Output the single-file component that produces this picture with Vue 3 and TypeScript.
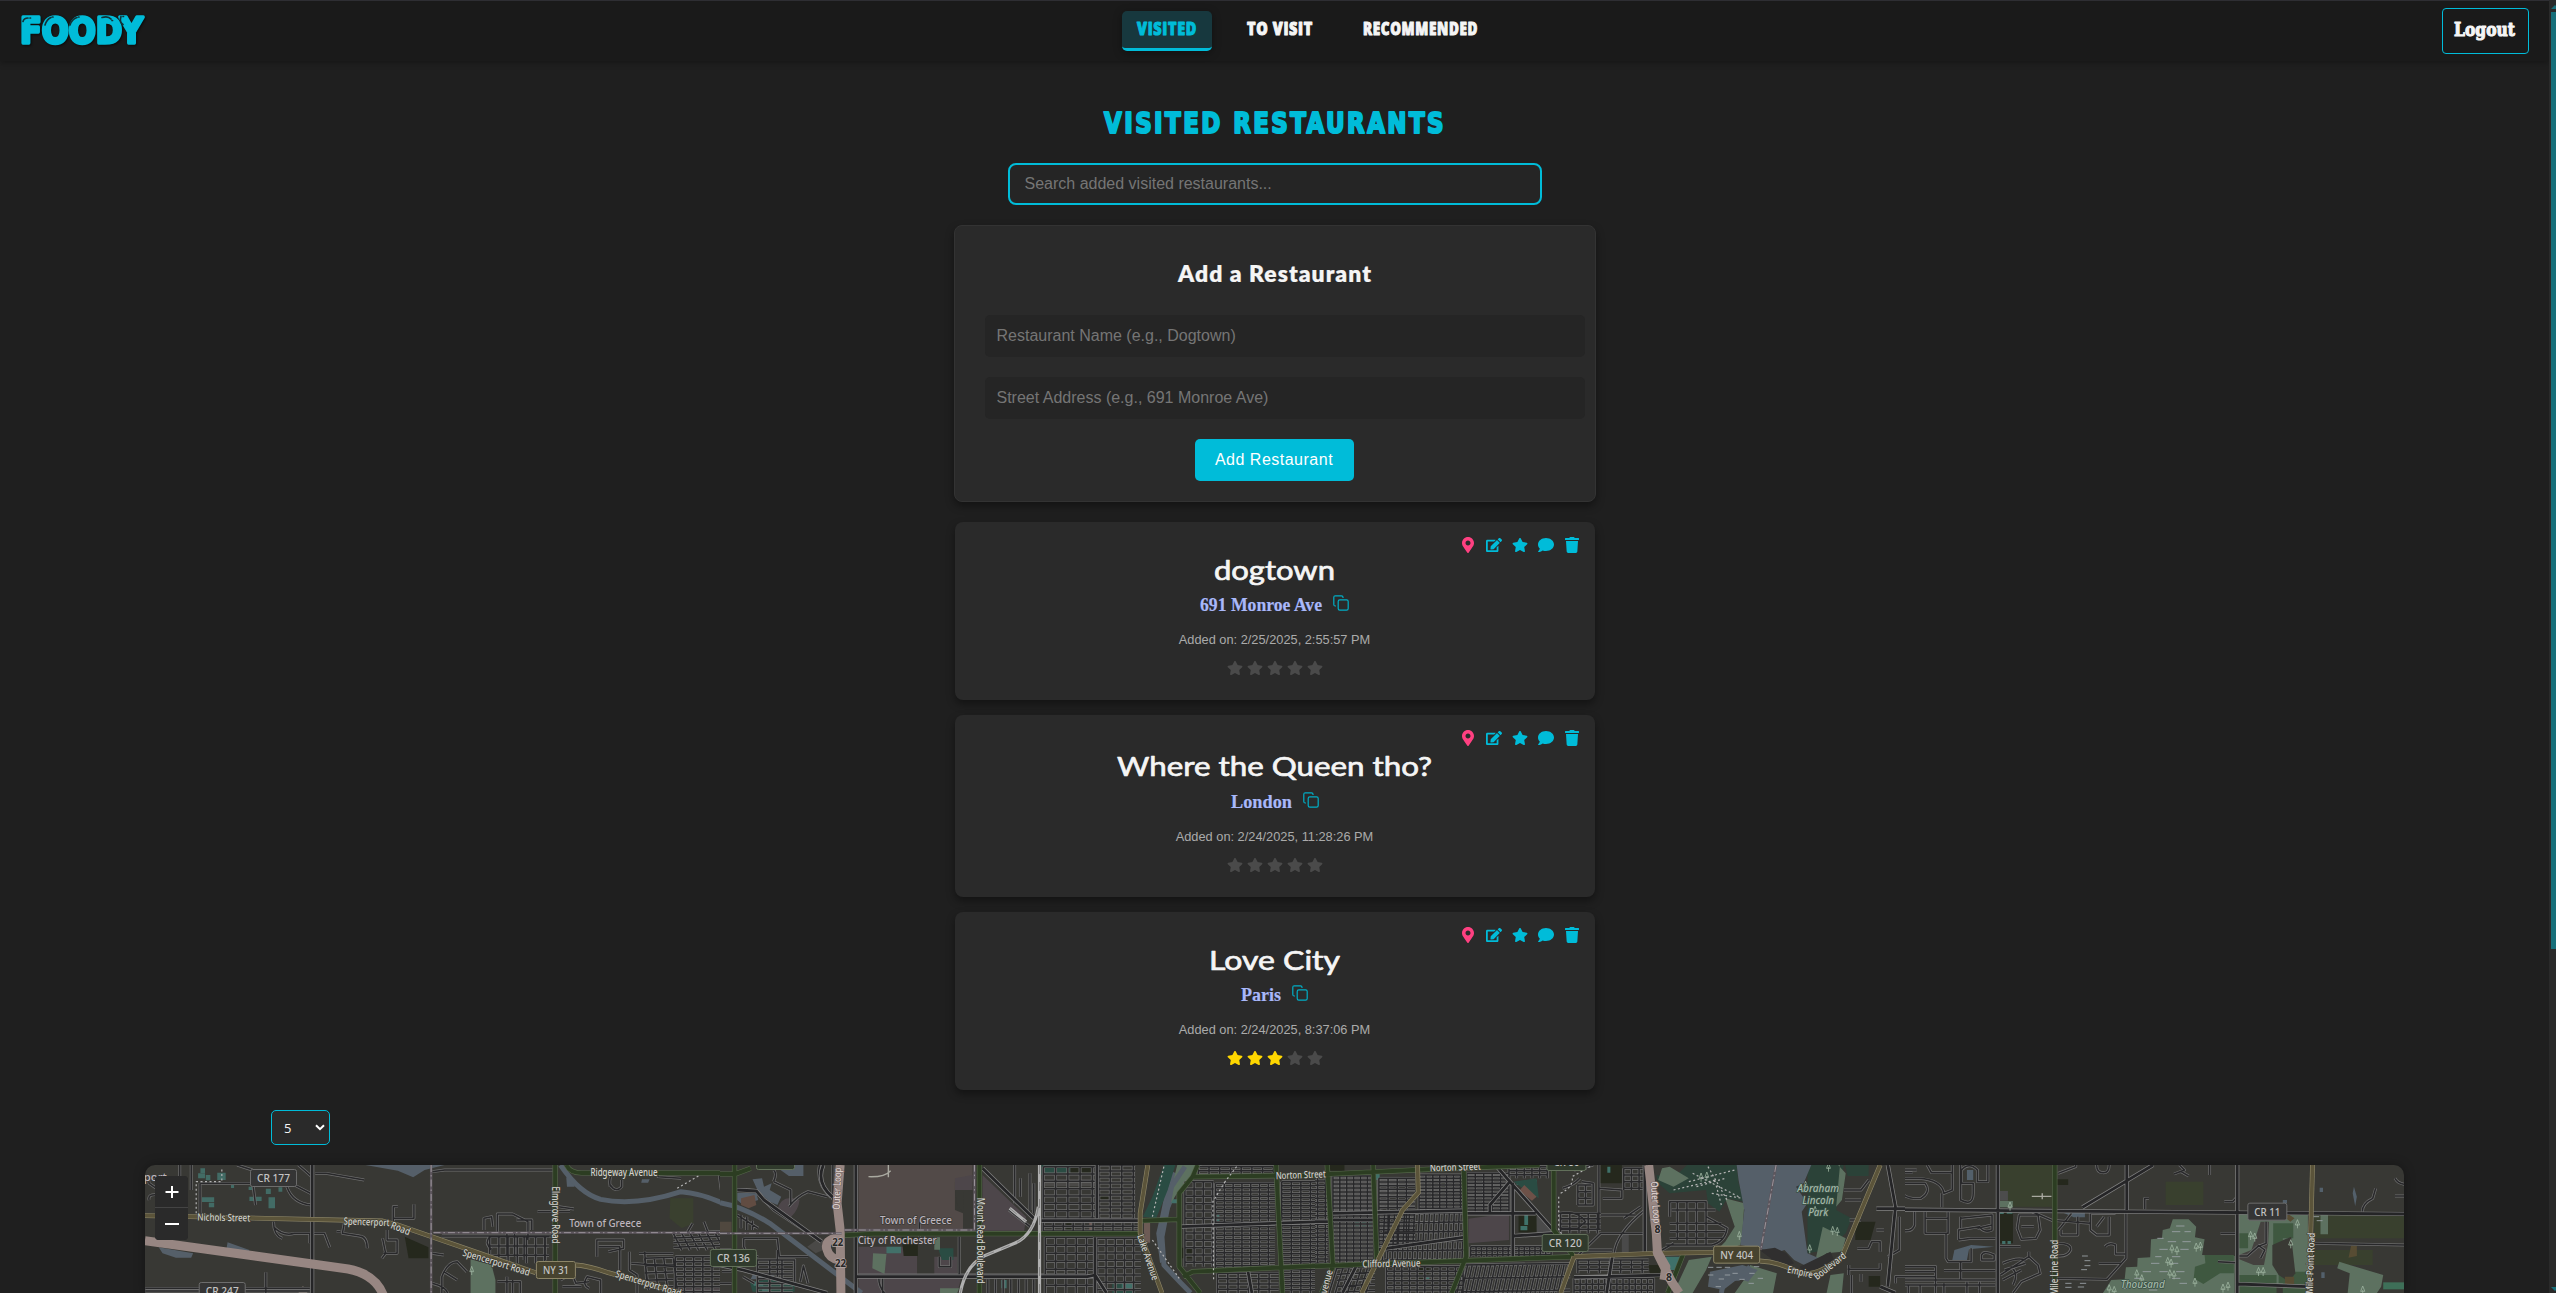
<script setup lang="ts">
import { h, ref } from 'vue'

/* Single line of lettering set to an exact measure. */
interface FitProps { text: string; w: number; h: number; base: number; size: number; spacing?: number; stroke?: number }
const FitText = (p: FitProps) =>
  h('svg', { width: p.w, height: p.h, viewBox: `0 0 ${p.w} ${p.h}`, style: 'display:block;overflow:visible;flex:none' }, [
    h('text', {
      x: 0, y: p.base, textLength: p.w, lengthAdjust: 'spacingAndGlyphs', fill: 'currentColor',
      stroke: 'currentColor', 'stroke-width': p.stroke ?? 0, 'stroke-linejoin': 'round',
      'font-size': p.size, 'letter-spacing': p.spacing ?? 0,
    }, p.text),
  ])
FitText.props = ['text', 'w', 'h', 'base', 'size', 'spacing', 'stroke']

const nav = [
  { label: 'VISITED', w: 60, active: true },
  { label: 'TO VISIT', w: 66, active: false },
  { label: 'RECOMMENDED', w: 115, active: false },
]

const starPath = 'M259.3 17.8L194 150.2 47.9 171.5c-26.2 3.8-36.7 36.1-17.7 54.6l105.7 103-25 145.5c-4.5 26.3 23.2 46 46.4 33.7L288 439.6l130.7 68.7c23.2 12.2 50.9-7.4 46.4-33.7l-25-145.5 105.7-103c19-18.5 8.5-50.8-17.7-54.6L382 150.2 316.7 17.8c-11.7-23.6-45.6-23.9-57.4 0z'
const actions = [
  { name: 'pin', box: '0 0 384 512', d: 'M172.268 501.67C26.97 291.031 0 269.413 0 192 0 85.961 85.961 0 192 0s192 85.961 192 192c0 77.413-26.97 99.031-172.268 309.67-9.535 13.774-29.93 13.773-39.464 0zM192 272c44.183 0 80-35.817 80-80s-35.817-80-80-80-80 35.817-80 80 35.817 80 80 80z' },
  { name: 'edit', box: '0 0 576 512', d: 'M402.6 83.2l90.2 90.2c3.8 3.8 3.8 10 0 13.8L274.4 405.6l-92.8 10.3c-12.4 1.4-22.9-9.1-21.5-21.5l10.3-92.8L388.8 83.2c3.8-3.8 10-3.8 13.8 0zm162-22.9l-48.8-48.8c-15.2-15.2-39.9-15.2-55.2 0l-35.4 35.4c-3.8 3.8-3.8 10 0 13.8l90.2 90.2c3.8 3.8 10 3.8 13.8 0l35.4-35.4c15.2-15.3 15.2-40 0-55.2zM384 346.2V448H64V128h229.8c3.2 0 6.2-1.3 8.5-3.5l40-40c7.6-7.6 2.2-20.5-8.5-20.5H48C21.5 64 0 85.5 0 112v352c0 26.5 21.5 48 48 48h352c26.5 0 48-21.5 48-48V306.2c0-10.7-12.9-16-20.5-8.5l-40 40c-2.2 2.3-3.5 5.3-3.5 8.5z' },
  { name: 'rate', box: '0 0 576 512', d: starPath },
  { name: 'comment', box: '0 0 512 512', d: 'M256 32C114.6 32 0 125.1 0 240c0 49.6 21.4 95 57 130.7C44.5 421.1 2.7 466 2.2 466.5c-2.2 2.3-2.8 5.7-1.5 8.7S4.8 480 8 480c66.3 0 116-31.8 140.6-51.4 32.7 12.3 69 19.4 107.4 19.4 141.4 0 256-93.1 256-208S397.4 32 256 32z' },
  { name: 'trash', box: '0 0 448 512', d: 'M432 32H312l-9.4-18.7A24 24 0 0 0 281.1 0H166.8a23.72 23.72 0 0 0-21.4 13.3L136 32H16A16 16 0 0 0 0 48v32a16 16 0 0 0 16 16h416a16 16 0 0 0 16-16V48a16 16 0 0 0-16-16zM53.2 467a48 48 0 0 0 47.9 45h245.8a48 48 0 0 0 47.9-45L416 128H32z' },
]

const restaurants = [
  { name: 'dogtown', nameW: 121, nameH: 34, base: 27, address: '691 Monroe Ave', addrW: 122, added: '2/25/2025, 2:55:57 PM', rating: 0 },
  { name: 'Where the Queen tho?', nameW: 315, nameH: 38, base: 30, address: 'London', addrW: 61, added: '2/24/2025, 11:28:26 PM', rating: 0 },
  { name: 'Love City', nameW: 131, nameH: 34, base: 27, address: 'Paris', addrW: 40, added: '2/24/2025, 8:37:06 PM', rating: 3 },
]
const search = ref('')
const newName = ref('')
const newAddress = ref('')
const pageSize = ref('5')

/* ---- Map: four sheets side by side, each with its own drawing units ---- */
interface Sheet { ox: number; oy: number; sx: number; x0: number; x1: number }
const sheets: Sheet[] = [
  { ox: 130, oy: 1090, sx: 2.6133, x0: 145, x1: 720 },
  { ox: 720, oy: 1150, sx: 2.6133, x0: 720, x1: 1315 },
  { ox: 1310, oy: 1150, sx: 2.6133, x0: 1315, x1: 1905 },
  { ox: 1900, oy: 1150, sx: 2.3902, x0: 1905, x1: 2404 },
]
const grid = (x0: number, y0: number, x1: number, y1: number, dx: number, dy: number, skew = 0): string => {
  let d = ''
  if (dx) for (let x = x0; x <= x1; x += dx) d += `M${x} ${y0}L${x - skew} ${y1}`
  if (dy) for (let y = y0; y <= y1; y += dy) d += `M${x0} ${y}L${x1} ${y - Math.abs(skew) * 0.3}`
  return d
}
const areas: [string, string][][] = [
  [
    ['#555f69', 'M615 225H822L770 240 740 262 700 242ZM75 472L165 490 160 503 120 503 85 490ZM255 457L312 480 310 487 252 477ZM1140 262L1158 270 1162 290 1142 290ZM1338 268h20l-4 10h-18Z'],
    ['#426b65', 'M184 235h12v14h-12zM178 250h18v15h-18zM198 255h12v16h-12zM228 248h22v22h-22zM264 285h8v9h-8zM310 290h12v10h-12zM312 320h32v13h-32zM355 296h13v16h-13zM388 292h10v13h-10zM362 322h17v33h-17zM188 322h32v14h-32zM206 338h14v14h-14z'],
    ['#25281d', 'M718 440L780 472V505H728Z'],
    ['#5d7160', 'M890 508L945 525 955 570V609H890Z'],
    ['#3a402f', 'M1412 325h60v75l-30 15-32-30Z'],
    ['#4d474a', 'M1548 395h20v30h-20zM1425 595h143v14h-143z'],
    ['#8c837a', 'M440 609L452 588 464 609Z'],
  ],
  [
    ['#50483f', 'M0 215h30v30H0z'],
    ['#524a48', 'M362 45H660V95H614V180L635 190V242H362Z'],
    ['#4d464a', 'M614 85L660 75V120H614ZM686 75L800 200 795 242H686ZM362 290H515V372H362ZM362 385H630L620 429H362ZM150 180Q160 130 208 150 205 180 185 202ZM560 320h60v54h-60z'],
    ['#4a4947', 'M840 87H985V108H840ZM228 290L262 262 290 290 250 310Z'],
    ['#555f69', 'M140 45H218V78H180ZM85 88L110 85 115 110 135 100 130 120 160 140 150 165 130 155 100 125ZM45 128L95 130 100 150 60 165 45 150ZM85 375H140V388H80ZM1175 60L1200 75 1185 150 1165 205 1150 255 1160 330 1150 340 1140 250 1150 200Z'],
    ['#614c42', 'M55 145L90 135 95 165 75 175 55 165Z'],
    ['#2a4c43', 'M840 45H915V75H840ZM78 395L135 388 195 402V425H85ZM570 295H610V330H580ZM1025 395H1085V429H1025ZM1160 45H1190L1170 120 1140 205 1105 200 1130 140Z'],
    ['#427069', 'M930 48h14v20h-14zM88 395h25v12H88zM110 410h22v14h-22zM435 290h38v20h-38zM735 390h14v25h-14zM1180 148h15v12h-15zM1285 190l20 5v18h-20zM1050 400h30v15h-30z'],
    ['#25281d', 'M917 45H970V72H917ZM475 262H517V318H480ZM993 130h22v18h-22zM1207 293h26v32h-26zM905 220h14v25h-14z'],
    ['#5d7160', 'M400 310L435 312 430 372 398 355ZM560 262h15v37h-15zM575 415H625L620 429H575ZM1195 45H1260L1200 120 1175 165 1185 90Z'],
    ['#6d5b55', 'M965 218h12v26h-12zM1108 218h16v60h-16z'],
    ['#383834', 'M614 122H635L637 188 620 165Z'],
  ],
  [
    ['#464544', 'M60 75H160V190H60ZM160 80H235L180 200H160Z'],
    ['#4d464a', 'M414 206L520 190V270L414 280Z'],
    ['#4a4a4a', 'M590 195L640 235 635 248H592ZM815 250h18v60h-18z'],
    ['#25281d', 'M545 192H592V247H545ZM755 45H815V100H755ZM50 45H90V62H50ZM341 97h14v25h-14zM278 345H310V388H278ZM885 345H925V385H890ZM1425 215H1478L1465 270H1425ZM1460 378h30v32h-30z'],
    ['#3f7169', 'M560 195h10v30h-10zM550 228h18v13h-18zM777 50h8v18h-8zM170 70h12v20h-12zM540 95h10v10h-10zM565 90h28v42h-28zM300 375h12v12h-12zM930 320h45l-18 40h-27z'],
    ['#2a4c43', 'M118 215h43v14h-43zM532 95L592 85 598 145 550 110Z'],
    ['#6d5148', 'M560 105L592 140 580 152 547 122Z'],
    ['#2b4238', 'M905 75L950 85 985 45H1115L1120 100 1135 155 1090 145 1070 185 1040 160 1035 120 940 130 910 100ZM1300 45H1395L1375 180 1415 205 1400 250 1350 300 1300 310ZM1398 45H1460V78H1405Z'],
    ['#5d7160', 'M920 55L940 50 990 85 950 110 910 90ZM1085 145L1135 160 1130 250 1125 285 1055 310 1085 275 1110 230ZM1380 45L1400 70 1390 150 1375 170 1385 45ZM1340 230L1400 265 1390 305 1350 310 1320 335ZM990 330L1050 320 1035 360 1000 429H950ZM1150 345L1220 370 1210 429H1110L1140 380ZM1360 375L1395 370 1390 429H1350Z'],
    ['#555f69', 'M1115 45H1310L1290 100 1270 110 1300 160 1285 185 1300 310 1330 325 1300 350 1265 330 1240 300 1215 310 1190 300 1125 285 1135 180 1120 90ZM1045 365L1130 345 1170 360 1145 395 1120 385 1080 420 1040 410Z'],
    ['#302f2f', 'M1175 300L1215 293 1245 310 1265 340 1240 350 1210 330ZM1280 350L1360 305 1370 330 1330 365 1290 372Z'],
  ],
  [
    ['#39402e', 'M238 45H365V170H238ZM635 95H725V165H635ZM990 195H1205V265H990ZM990 300H1130V345H990Z'],
    ['#4c4c4c', 'M238 123H258V152H238Z'],
    ['#5d7160', 'M238 153H270V172H238ZM652 208L690 208 708 230 705 262 728 268 722 315 800 318V429H485L505 390 537 388 540 352 567 350 568 324 598 322 600 268 626 265 628 240 645 235ZM810 190H975V405H810ZM1005 195h18v58h-18zM1050 335L1075 345 1155 375 1150 410 1140 429H1070L1075 370 1045 355Z'],
    ['#3f5840', 'M728 315H798V370H765L725 402 702 385 705 350 730 340ZM810 250H832V295H810ZM892 220H940V265H915V285H892ZM905 365H975V400H905ZM810 375H900V429H810ZM915 400H970V429H915Z'],
    ['#393934', 'M890 285L935 260 945 370 930 395 905 375 890 345Z'],
    ['#44423f', 'M862 215H882L880 280 870 345 845 345 805 325 810 315 840 300Z'],
    ['#25281d', 'M238 182H270V280H238ZM375 88H402V105H375Z'],
    ['#574c33', 'M920 380h22v25h-22zM925 190l18 15-10 10-10-10ZM1078 288h14v30l-20 5Z'],
    ['#53606b', 'M160 60h15v30h-15zM385 185H442V202H415ZM1085 110L1092 140 1088 168 1082 130ZM1003 113h8v13h-8zM1007 367h8v17h-8zM130 300L170 285 225 290 165 298 160 330H125ZM915 150h10v10h-10z'],
    ['#427069', 'M238 180h10v12h-10zM255 182h14v9h-14zM244 273h8v9h-8zM257 273h8v9h-8z'],
    ['#3e6f58', 'M1155 397H1205V418H1155Z'],
  ],
]
const streets: string[] = [
  [
    'M484 250H512L612 270M184 280H320M183 280V370M320 270L328 345M388 260L475 312M410 290Q425 340 475 345M130 225V270H90M160 225V300M70 265Q45 250 50 280L75 300M50 330Q45 310 75 315M280 225L320 240M440 225L475 260M700 350H688V415M690 385H742V343M375 395Q375 435 398 445M375 410Q400 440 430 430H508L522 472M470 430V460M560 400L555 430 600 438Q620 440 620 475M550 425H540M660 445L668 490 658 505M662 490H698V450H672V420',
    'M790 245L822 240H1105M815 438H1100M790 490L820 495M960 430V372H1000L1040 395V450M925 420V385L945 380 948 410M1005 430V500M1065 365H1150M1120 350L1160 357M1010 390H1050V420M985 430V495M940 440Q925 460 945 478M1030 440V510M1060 450V520M1085 440V510M815 609V560Q830 515 855 515L880 545M790 580Q825 590 830 609M820 545L855 570M960 575H1020V609M985 560V609M1000 570V609M1125 570L1155 550 1165 580 1200 575M1200 595Q1180 585 1195 560L1230 570V609M1130 590H1180M1220 500V450H1290V475L1250 485M1225 470H1280V540M1255 290Q1250 260 1265 245M1255 285Q1270 310 1285 290V270M1380 245V260L1440 265M1540 255L1545 300',
    'M1305 485V540L1325 555V609M1330 490H1420M1345 485L1350 570M1310 520L1430 530M1455 430L1470 400M1500 395L1510 425M355 547V609M40 595H470M40 603H470',
    grid(1420, 430, 1568, 480, 22, 14, -22), grid(1425, 500, 1568, 609, 24, 15), grid(1345, 505, 1420, 600, 25, 22, -10), grid(940, 440, 1095, 520, 24, 28),
  ].join(''),
  [
    'M45 118L80 120Q105 120 110 145L140 180 265 275M140 95Q150 70 140 60M140 95L185 120V165M180 170Q200 140 230 125L280 140M260 45Q250 100 290 142M45 195L100 235M55 195V235M70 200V240M85 212V240M62 265H150L155 320H230M62 265V290Q70 320 100 320M95 330H195V395M150 300V380M0 300H30M0 320H28M5 365H30M0 400H30M210 395L218 348 230 400M60 380L90 400M295 150V45M355 45V429M357 375H960M425 375V429M521 215V260M625 260V374M770 45V160M785 85V140M810 70V180M820 100V190M755 180L810 230M573 320V350H603V320M415 385Q415 410 430 429',
    grid(700, 388, 830, 429, 20, 0), grid(845, 50, 985, 208, 32, 22), grid(990, 45, 1085, 210, 30, 18), grid(850, 262, 975, 429, 27, 24), grid(985, 265, 1100, 429, 24, 22), grid(98, 330, 190, 429, 32, 14), grid(845, 215, 1095, 245, 26, 14),
    grid(1215, 95, 1290, 350, 24, 22), grid(1295, 100, 1450, 355, 23, 13), grid(1468, 95, 1568, 429, 25, 12), grid(1300, 370, 1460, 429, 27, 16), grid(1250, 50, 1450, 78, 28, 12),
  ].join(''),
  [
    grid(60, 78, 165, 340, 18, 12), grid(180, 85, 275, 290, 24, 11), grid(0, 80, 48, 345, 20, 13), grid(285, 75, 400, 180, 18, 10), grid(195, 190, 405, 330, 13, 28, 6), grid(410, 70, 520, 190, 22, 10), grid(420, 290, 630, 320, 14, 12), grid(400, 345, 680, 429, 12, 40, 16), grid(200, 350, 400, 429, 20, 14), grid(70, 355, 170, 429, 16, 18, 20), grid(520, 50, 620, 85, 20, 12),
    grid(700, 105, 735, 165, 20, 20), grid(655, 190, 760, 250, 24, 16), grid(700, 330, 885, 370, 28, 14), grid(690, 385, 900, 429, 16, 18), grid(820, 55, 870, 120, 20, 20),
    'M660 115Q690 105 705 85M650 190Q700 180 720 215L700 235H650M755 45V240M755 115L815 120V145H765M820 205L865 170M795 310Q800 250 875 180M680 340L760 250H870M760 195H850M655 300H790M940 200V155H1035V200L1090 235Q1085 275 1050 285H930M960 155V270M985 155V285M1010 155V285M1035 190V285M945 180H1060M940 220H1075M940 245H1085M940 265H1080M920 300L950 280M1395 120H1440L1460 90M1398 150H1440M1410 210H1440M1480 240H1500M1430 295H1460L1468 275H1490V305M1405 358H1490V340M1408 375V345M1540 200V300L1510 320M1415 375V429M1440 372V395M1530 400V380H1568M690 60L740 45M710 95L740 100V165H700',
  ].join(''),
  [
    'M0 85H45Q100 90 105 130L125 120V45M0 120Q10 150 50 145 75 125 60 100L0 100M65 45L75 68H125M100 130V172M145 45V150Q175 170 175 130V100H147V60Q165 35 185 60V95H210V45M35 182V225Q30 245 10 242M60 182V250H115V182M60 205H115M145 200V235M145 205L220 195V225L185 235M140 270V240L190 230Q200 250 220 240V225M140 270L170 265H228M110 250V325L115 335H170V295M195 315Q200 300 225 315V330H195ZM0 350H85V429M0 365H85M0 380H85M145 335V390M105 362H228M0 390H228M0 405H228M20 405V429M48 405V429M105 400V429M160 395V429M190 395V429M238 290H288M285 195H330L335 240 325 265 290 268 280 235ZM310 182L365 212M290 230H320M308 305V320L240 375M308 320L330 345 335 370 290 395 270 429M245 340Q280 320 300 330M250 360L300 340M245 390L290 360M265 350Q285 370 270 405M378 240L385 230 410 190M385 240V255H425V200M375 212L455 220V190H515M455 215V240L470 255H500V200M470 230L488 200M378 280Q410 280 408 300 400 320 378 318M475 340H530M490 290Q500 275 515 285V312H538M540 182V325L495 388 375 385M378 70L420 50V45M470 45Q470 68 485 68 500 70 500 45M655 72L680 60 668 45M672 65L690 78M740 45V75M585 178V145H595M775 155H795L803 145M766 250H805M760 335L803 338M875 215V280L855 290 830 318H808M855 285L872 300 862 325M1105 185Q1105 160 1130 145L1137 115M1183 85Q1190 100 1205 103M1183 138H1205M990 280L1205 285M0 45V60H40M0 68H30',
  ].join(''),
]
const mainRoads = [
  'M476 225V609',
  'M686 55L820 205M355 45V429M270 45Q250 100 295 142M0 345L60 360 280 429M357 380H960L980 375 1010 429M840 212H1095M980 429V262M985 45V205M1205 230L1568 215M1380 365L1390 429M45 120L95 123 115 150 265 275',
  'M490 52L520 92 635 240M520 98L470 165V190M0 215H50M60 190L400 182M170 300L400 262M410 190L590 190M530 98V330M532 258L635 250M875 45V310M1480 176H1568M1510 45L1530 170 1510 410M790 320L775 429M120 350L85 429M690 382L930 375M1490 410L1530 429M60 210H170',
  'M0 179L1205 192M234 45V429M806 45V429M436 172L605 45M542 45V180M808 402L975 410',
]
const greenRoads = [
  'M1111 225V609M1140 225Q1150 249 1180 249H1568',
  'M38 45V429M0 72H40L80 55M678 45V429M325 256L400 251H1100M1100 212L1200 208M1248 45L1235 80 1200 130V350L1255 429M1238 80L1568 76M1453 45L1470 429M1210 380L1235 365 1568 347',
  'M0 75L310 58 600 45M45 45L60 350 30 429M165 45L175 345M402 60L408 320 370 429M0 349L690 320M637 62V240L690 320M975 313L935 429',
  'M370 45V429',
]
const tanRoads = [
  'M39 377L660 393 700 405 1060 548M1165 525Q1200 528 1250 548L1440 609',
  'M1118 45L1098 190V250L1155 429',
  'M281 45L283 128 242 180 135 429M690 320L900 310 1055 307M1175 333Q1220 335 1265 360 1310 395 1390 320L1490 45M690 320L655 429',
  'M986 45L978 429',
]
const highways = [
  'M39 452L570 537Q640 552 662 615',
  'M314 45L306 160 314 240 316 429M310 262Q270 270 280 300 285 325 312 330',
  'M885 45L905 250 908 310 945 395 965 429M905 300L930 350 925 390',
  '',
]
const rivers = [
  'M1125 225Q1175 310 1230 328 1320 350 1440 305 1500 310 1568 350',
  'M0 158Q60 170 130 220L370 429M1215 50L1180 110 1165 200 1155 260 1160 345 1205 400 1230 429',
  'M1075 429Q1080 380 1120 385L1150 350',
  '',
]
const borders = [
  'M787 225V609M793 428H1568',
  'M0 250H318M325 240H665V45',
  'M1218 45L1200 160 1178 300',
  '',
]
const rails = ['', 'M835 45V429M832 170Q820 255 770 280L690 318Q640 350 628 429M757 175L800 215', '', '']
const sidings = ['', 'M440 45V82M388 80Q430 82 446 62', '', 'M315 139H362M340 130V148']
const paths = [
  'M173 370V275H240V232M1430 295L1490 255',
  'M1160 50L1130 200M1320 95L1288 155 1290 395M1130 270L1200 385M1350 50L1320 95',
  'M655 130Q690 110 685 80L735 48M650 140V240L690 300M1000 70L1120 140M990 95L1110 60M950 120L1060 90M1040 50L1090 150M1050 130L1130 145M1075 165L1060 100M1010 110L1085 85',
  '',
]
const marsh = [
  '', '',
  'M1040 352h14m8 0h14m8 0h14M1040 375h14m30 0h14m-30 12h14M1060 410h14m30-40h14m30 0h14m-40 18h14m10 12h14M1160 350h14M1170 385h14',
  'M660 228h20M650 245h20m10 0h15M640 275h20m15 0h20M615 265h15M620 298h20m30 0h20M610 320h15m25 0h20M600 340h20m25 0h20M580 365h20m20 0h20m20 0h20M560 385h20m70 0h20M610 400h18m40 0h18M435 318h14m-8 14h14m-14 15h14m-22 12h14M395 400h15m20 0h15m-50 12h15m15-1h15M530 415h15m50 5h20M988 200h14m-6 12h14',
]
const trees = [
  [[893, 535]],
  [],
  [[1022, 75], [1037, 72], [1122, 250], [1355, 45], [1366, 235], [1378, 238], [1306, 290], [1295, 100], [1320, 175]],
  [[263, 162], [650, 290], [662, 295], [708, 285], [718, 282], [640, 328], [648, 333], [566, 365], [578, 380], [645, 365], [655, 368], [500, 410], [512, 415], [772, 408], [784, 402], [838, 250], [848, 255], [857, 358], [868, 358], [705, 390], [950, 215], [934, 275], [1106, 414]],
]
const treePath = ([x, y]: number[]) => `M${x} ${y + 20}V${y + 6}M${x - 5} ${y + 10}L${x} ${y - 6}L${x + 5} ${y + 10}Z`

interface Label { s: number; x: number; y: number; t: string; w: number; size?: number; r?: number; kind?: string }
const raw: Label[] = [
  { s: 0, x: 66, y: 272, t: 'port', w: 23, size: 11, kind: 'place' },
  { s: 0, x: 245, y: 393, t: 'Nichols Street', w: 53, r: 1 },
  { s: 0, x: 618, y: 406, t: 'Spencerport', w: 46, r: 2 },
  { s: 0, x: 704, y: 425, t: 'Road', w: 20, r: 22 },
  { s: 0, x: 955, y: 527, t: 'Spencerport Road', w: 70, r: 17 },
  { s: 0, x: 1352, y: 590, t: 'Spencerport Road', w: 68, r: 17 },
  { s: 0, x: 1103, y: 375, t: 'Elmgrove Road', w: 57, r: 90 },
  { s: 0, x: 1291, y: 259, t: 'Ridgeway Avenue', w: 67 },
  { s: 0, x: 1242, y: 411, t: 'Town of Greece', w: 72, size: 11, kind: 'place' },
  { s: 1, x: 512, y: 222, t: 'Town of Greece', w: 72, size: 11, kind: 'place' },
  { s: 1, x: 463, y: 282, t: 'City of Rochester', w: 79, size: 11, kind: 'place' },
  { s: 1, x: 315, y: 116, t: 'Outer Loop', w: 42, r: -88, kind: 'outer' },
  { s: 1, x: 308, y: 287, t: '22', w: 11, kind: 'exit' },
  { s: 1, x: 315, y: 352, t: '22', w: 11, kind: 'exit' },
  { s: 1, x: 671, y: 272, t: 'Mount Read Boulevard', w: 86, r: 90 },
  { s: 1, x: 1110, y: 325, t: 'Lake Avenue', w: 48, r: 71 },
  { s: 1, x: 1518, y: 85, t: 'Norton Street', w: 50, r: -2 },
  { s: 2, x: 380, y: 62, t: 'Norton Street', w: 51, r: -2 },
  { s: 2, x: 213, y: 351, t: 'Clifford Avenue', w: 58, r: -1 },
  { s: 2, x: 50, y: 405, t: 'Avenue', w: 29, r: -75 },
  { s: 2, x: 894, y: 158, t: 'Outer Loop', w: 42, r: 86, kind: 'outer' },
  { s: 2, x: 908, y: 248, t: '8', w: 6, kind: 'exit' },
  { s: 2, x: 938, y: 394, t: '8', w: 6, kind: 'exit' },
  { s: 2, x: 1279, y: 376, t: 'Empire', w: 26, r: 13 },
  { s: 2, x: 1364, y: 356, t: 'Boulevard', w: 38, r: -38 },
  { s: 2, x: 1328, y: 126, t: 'Abraham', w: 42, size: 11, kind: 'park' },
  { s: 2, x: 1328, y: 161, t: 'Lincoln', w: 32, size: 11, kind: 'park' },
  { s: 2, x: 1328, y: 197, t: 'Park', w: 20, size: 11, kind: 'park' },
  { s: 3, x: 378, y: 352, t: 'Mile Line Road', w: 55, r: -90 },
  { s: 3, x: 989, y: 340, t: 'Mile Point Road', w: 61, r: -88 },
  { s: 3, x: 580, y: 415, t: 'Thousand', w: 44, size: 11, kind: 'park' },
]
const place = (s: number, x: number, y: number) => [sheets[s].ox + x / sheets[s].sx, sheets[s].oy + y / 3]
const labels = raw.map((l) => {
  const [x, y] = place(l.s, l.x, l.y)
  return { ...l, px: x, py: y, kind: l.kind ?? 'road' }
})
const shields = [
  { s: 0, x: 375, y: 264, t: 'CR 177', w: 46, c: 'plain' },
  { s: 0, x: 241, y: 603, t: 'CR 247', w: 46, c: 'plain' },
  { s: 0, x: 1113, y: 540, t: 'NY 31', w: 39, c: 'tan' },
  { s: 1, x: 35, y: 324, t: 'CR 136', w: 46, c: 'green' },
  { s: 1, x: 145, y: 33, t: 'CR 111', w: 38, c: 'green' },
  { s: 2, x: 670, y: 36, t: 'CR 86', w: 39, c: 'green' },
  { s: 2, x: 667, y: 279, t: 'CR 120', w: 46, c: 'green' },
  { s: 2, x: 1115, y: 314, t: 'NY 404', w: 46, c: 'tan' },
  { s: 3, x: 878, y: 185, t: 'CR 11', w: 39, c: 'plain' },
].map((b) => {
  const [px, py] = place(b.s, b.x, b.y)
  return { ...b, px, py }
})
</script>

<template>
  <div class="page">
    <div class="content">
      <header class="bar">
        <div class="logo">
          <FitText text="FOODY" :w="123" :h="60" :base="41.5" :size="36" :stroke="3.4" />
          <svg class="gloss" width="125" height="60" viewBox="0 0 125 60">
            <path d="M3 20.500Q4 17 8 17M25 24Q27 18 31 16.500M50 24Q52 18 57 16.500M82 16.500Q88 14.500 91 18M101 15.500Q99 21 103 23.500" />
            <path d="M10 17h.5M32.500 16h.5M58.500 16h.5M92 19.500h.5M103 15.500h.5" />
          </svg>
        </div>
        <nav class="nav">
          <a v-for="n in nav" :key="n.label" class="tab" :class="{ active: n.active }">
            <FitText :text="n.label" :w="n.w" :h="37" :base="24" :size="17" :stroke="1" :spacing="0.8" />
          </a>
        </nav>
        <button class="logout"><FitText text="Logout" :w="61" :h="44" :base="27" :size="19" :stroke="1.2" /></button>
      </header>

      <main class="main">
        <h1 class="title">
          <FitText text="VISITED RESTAURANTS" :w="342" :h="40" :base="27" :size="28" :stroke="2.2" :spacing="3" />
        </h1>
        <input v-model="search" class="search" placeholder="Search added visited restaurants..." />

        <section class="form">
          <h2><FitText text="Add a Restaurant" :w="194" :h="30" :base="21.500" :size="22" :spacing="1" :stroke="0.2" /></h2>
          <input v-model="newName" class="field" placeholder="Restaurant Name (e.g., Dogtown)" />
          <input v-model="newAddress" class="field" placeholder="Street Address (e.g., 691 Monroe Ave)" />
          <button class="add">Add Restaurant</button>
        </section>

        <article v-for="r in restaurants" :key="r.name" class="card">
          <div class="actions">
            <svg v-for="a in actions" :key="a.name" :class="a.name" width="16" height="16" :viewBox="a.box"><path :d="a.d" /></svg>
          </div>
          <div class="name"><FitText :text="r.name" :w="r.nameW" :h="r.nameH" :base="r.base" :size="27.500" :stroke="0.7" /></div>
          <div class="address">
            <FitText :text="r.address" :w="r.addrW" :h="32" :base="24" :size="19.500" :stroke="0.2" />
            <svg class="copy" width="16" height="16" viewBox="0 0 16 16">
              <rect x="5.200" y="4.800" width="10" height="10.400" rx="1.600" />
              <path d="M3 11H2.300Q.8 11 .8 9.500V2.300Q.8.8 2.300.8H8.500Q10 .8 10 2.300V3" />
            </svg>
          </div>
          <p class="added">Added on: {{ r.added }}</p>
          <div class="stars">
            <svg v-for="i in 5" :key="i" width="16" height="16" viewBox="0 0 576 512" :class="{ on: i <= r.rating }"><path :d="starPath" /></svg>
          </div>
        </article>
      </main>

      <div class="pager">
        <div class="select">
          <span>{{ pageSize }}</span>
          <svg width="10" height="7" viewBox="0 0 10 7"><path d="M1 1.200L5 5.200 9 1.200" /></svg>
        </div>
      </div>

      <div class="map">
        <svg width="2259" height="128" viewBox="145 1165 2259 128">
          <defs>
            <clipPath v-for="(s, i) in sheets" :id="'sheet' + i" :key="i">
              <rect :x="s.x0" y="1165" :width="s.x1 - s.x0" height="128" />
            </clipPath>
          </defs>
          <g v-for="(s, i) in sheets" :key="i" :clip-path="`url(#sheet${i})`">
            <g class="lines" :transform="`translate(${s.ox} ${s.oy}) scale(${1 / s.sx} ${1 / 3})`">
              <path v-for="(a, k) in areas[i]" :key="k" class="area" :fill="a[0]" :d="a[1]" />
              <path class="river" :d="rivers[i]" />
              <path class="st-case" :d="streets[i]" />
              <path class="st" :d="streets[i]" />
              <path class="main-case" :d="mainRoads[i]" />
              <path class="main-road" :d="mainRoads[i]" />
              <path class="marsh" :d="marsh[i]" />
              <path v-for="(t, k) in trees[i]" :key="'t' + k" class="tree" :d="treePath(t)" />
              <path class="green-case" :d="greenRoads[i]" />
              <path class="green-road" :d="greenRoads[i]" />
              <path class="tan-case" :d="tanRoads[i]" />
              <path class="tan-road" :d="tanRoads[i]" />
              <path class="rail" :d="rails[i]" />
              <path class="rail-in" :d="rails[i]" />
              <path class="siding" :d="sidings[i]" />
              <path class="highway" :d="highways[i]" />
              <path class="border-base" :d="borders[i]" />
              <path class="border" :d="borders[i]" />
              <path class="trail" :d="paths[i]" />
            </g>
          </g>
          <text
            v-for="(l, i) in labels" :key="'l' + i" :class="['lbl', l.kind]" :x="l.px" :y="l.py"
            :font-size="l.size ?? 10" :textLength="l.w" lengthAdjust="spacingAndGlyphs" text-anchor="middle"
            :transform="l.r ? `rotate(${l.r} ${l.px} ${l.py})` : undefined"
          >{{ l.t }}</text>
          <g v-for="b in shields" :key="b.t" :class="['shield', b.c]">
            <rect :x="b.px - b.w / 2" :y="b.py - 8.500" :width="b.w" height="17" rx="2" />
            <text :x="b.px" :y="b.py + 4" text-anchor="middle" :textLength="b.w - 13" lengthAdjust="spacingAndGlyphs">{{ b.t }}</text>
          </g>
        </svg>
        <div class="zoom">
          <button><svg width="14" height="14" viewBox="0 0 14 14"><path d="M7 1v12M.5 7h13" /></svg></button>
          <button><svg width="14" height="14" viewBox="0 0 14 14"><path d="M0 7h14" /></svg></button>
        </div>
      </div>
    </div>
    <div class="scroll">
      <svg width="5" height="12" viewBox="0 0 5 12"><path d="M0 9L4 5 5 6V9Z" /></svg>
      <div class="thumb"></div>
      <svg width="5" height="12" viewBox="0 0 5 12"><path d="M0 6H5V9L4 10Z" /></svg>
    </div>
  </div>
</template>

<style>
body { background: #1f1f1f; overflow: hidden; }
</style>

<style scoped>
.page { display: flex; width: 2556px; height: 1293px; overflow: hidden; background: #1f1f1f; color: #f5f5f5; font-family: "Liberation Sans", Arial, sans-serif; }
.content { width: 2549px; height: 1293px; overflow: hidden; display: flex; flex-direction: column; }
button, input { box-sizing: border-box; font-family: inherit; }
.bar { flex: none; display: flex; box-sizing: border-box; height: 61px; width: 2549px; border-top: 1px solid #2e2e33; padding: 0 20px; background: #1a1a1a; box-shadow: 0 2px 6px rgba(0, 0, 0, 0.3); }
.logo { position: relative; width: 125px; color: #00bcd9; font-family: "DejaVu Sans", sans-serif; font-weight: 700; filter: drop-shadow(1px 1px 1px rgba(0, 0, 0, 0.6)); }
.gloss { position: absolute; left: 0; top: 0; fill: none; stroke: #123238; stroke-width: 1.7; stroke-linecap: round; }
.nav { display: flex; gap: 20px; margin: 10px 0 0 977px; font-family: "Open Sans", sans-serif; font-weight: 800; }
.tab { box-sizing: border-box; height: 40px; padding: 0 15px; border-bottom: 3px solid transparent; border-radius: 5px; }
.active { background: #17383e; color: #00bcd9; border-bottom-color: #00bcd9; box-shadow: 0 2px 8px rgba(0, 0, 0, 0.35); }
.logout { margin: 7px 0 0 auto; width: 87px; height: 46px; padding: 0 0 0 11px; background: #1a1a1a; border: 1px solid #00bcd9; border-radius: 4px; color: #f5f5f5; font-family: "DejaVu Serif", serif; font-weight: 700; }
.main { flex: none; display: flex; flex-direction: column; align-items: center; padding-top: 45px; }
h1, h2, p { margin: 0; }
.title { height: 57px; color: #00bcd9; font-family: "DejaVu Sans", sans-serif; }
input { font-size: 16px; color: #f5f5f5; background: #252525; }
input::placeholder { color: #757575; }
.search { width: 534px; height: 42px; padding: 0 15px; border: 2px solid #00bcd9; border-radius: 8px; }
.form { box-sizing: border-box; width: 642px; height: 277px; margin: 20px 0; padding: 34px 0 0 30px; display: flex; flex-direction: column; border: 1px solid #333; border-radius: 8px; background: #2a2a2a; box-shadow: 0 4px 8px rgba(0, 0, 0, 0.4); }
.form h2 { height: 55px; padding-left: 193px; font-family: Lato, sans-serif; font-weight: 800; }
.field { flex: none; width: 600px; height: 42px; margin-bottom: 20px; padding: 0 12px; border: 0; border-radius: 5px; }
.add { width: 159px; height: 42px; margin-left: 210px; padding: 0; border: 0; border-radius: 5px; background: #00bcd9; color: #fff; font-size: 16px; letter-spacing: 0.5px; }
.card { box-sizing: border-box; width: 640px; padding: 15px 15px 24px; margin-bottom: 15px; border-radius: 8px; background: #2a2a2a; box-shadow: 0 4px 8px rgba(0, 0, 0, 0.4); }
.actions { display: flex; justify-content: flex-end; gap: 10px; height: 16px; fill: #00bcd9; }
.actions .pin { fill: #ff4081; }
.name { display: flex; justify-content: center; font-family: Lato, sans-serif; font-weight: 400; }
.address { display: flex; justify-content: center; gap: 11px; height: 32px; color: #a9b8fa; font-family: "Liberation Serif", serif; font-weight: 700; }
.copy { margin-top: 8px; fill: none; stroke: #00aec6; stroke-width: 1.2; }
.added { margin-top: 11px; height: 20px; line-height: 20px; text-align: center; color: #aaa; font-size: 12.8px; }
.stars { display: flex; justify-content: center; gap: 4px; margin-top: 10px; fill: #4a4a4a; }
.stars .on { fill: #ffd700; }
.pager { flex: none; height: 55px; padding: 5px 0 0 271px; }
.select { box-sizing: border-box; display: flex; align-items: center; justify-content: space-between; width: 59px; height: 35px; padding: 0 4px 0 12px; border: 1px solid #00bcd9; border-radius: 5px; background: #2a2a2a; font: 500 13px "Open Sans", sans-serif; }
.select path { fill: none; stroke: #fff; stroke-width: 2; }
.map { flex: none; position: relative; width: 2259px; height: 128px; margin-left: 145px; border-radius: 10px 10px 0 0; overflow: hidden; background: #383834; box-shadow: 0 0 12px rgba(0, 0, 0, 0.3); }
.map > svg { display: block; }
.lines path { vector-effect: non-scaling-stroke; fill: none; stroke-linejoin: round; }
.lines path.area { fill: revert-layer; }
.river { stroke: #555f69; stroke-width: 5; }
.st-case { stroke: #6e6e6e; stroke-width: 2.9; }
.st { stroke: #28282a; stroke-width: 1.5; }
.main-case { stroke: #828282; stroke-width: 4.2; }
.main-road { stroke: #252527; stroke-width: 2.8; }
.green-case { stroke: #55664a; stroke-width: 5.2; }
.green-road { stroke: #2c3d22; stroke-width: 4; }
.tan-case { stroke: #8d8668; stroke-width: 4.8; }
.tan-road { stroke: #5b543a; stroke-width: 3.6; }
.highway { stroke: #978682; stroke-width: 9; }
.rail { stroke: #b0b0b0; stroke-width: 3.2; }
.rail-in { stroke: #777; stroke-width: 0.8; stroke-dasharray: 9 8; }
.siding { stroke: #a9a9a0; stroke-width: 1.4; }
.border-base { stroke: #5d565d; stroke-width: 2.4; }
.border { stroke: #9b949b; stroke-width: 1; stroke-dasharray: 7 3 1.500 3; }
.trail { stroke: #b4b4b4; stroke-width: 1.2; stroke-dasharray: 2 2.500; }
.marsh { stroke: #9aa0a5; stroke-width: 0.9; }
.tree { stroke: #9db4a0; stroke-width: 0.8; }
.lbl { font-family: "Noto Sans", sans-serif; font-weight: 500; fill: #d2d2cc; stroke: #3b3b33; stroke-width: 1.5; paint-order: stroke; stroke-linejoin: round; }
.place { fill: #bdb5bd; stroke: #383834; }
.park { fill: #a3b7a8; stroke: #385044; font-style: italic; }
.outer { fill: #ddd0cd; stroke: #776a67; }
.exit { fill: #282828; stroke: #b3a5a2; font-weight: 700; }
.shield rect { stroke-width: 1; fill: #353535; stroke: #6d6d6d; }
.shield text { font: 500 11.500px "Noto Sans", sans-serif; fill: #c4c4c4; }
.shield.green rect { fill: #303a2c; stroke: #62705a; }
.shield.tan rect { fill: #47432f; stroke: #8d8668; }
.zoom { position: absolute; left: 10px; top: 11px; width: 33px; height: 64px; border-radius: 4px; overflow: hidden; background: #2a2a2a; display: flex; flex-direction: column; }
.zoom button { width: 33px; height: 32px; padding: 0; border: 0; border-bottom: 1px solid #444; background: #2a2a2a; display: flex; align-items: center; justify-content: center; }
.zoom button:last-child { border-bottom: 0; }
.zoom path { stroke: #fff; stroke-width: 2; }
.scroll { display: flex; flex-direction: column; box-sizing: border-box; width: 7px; padding-left: 2px; background: #2a2a2a; fill: #176f7a; }
.scroll svg { flex: none; display: block; }
.thumb { height: 937px; margin-bottom: 332px; background: #176f7a; }
</style>
